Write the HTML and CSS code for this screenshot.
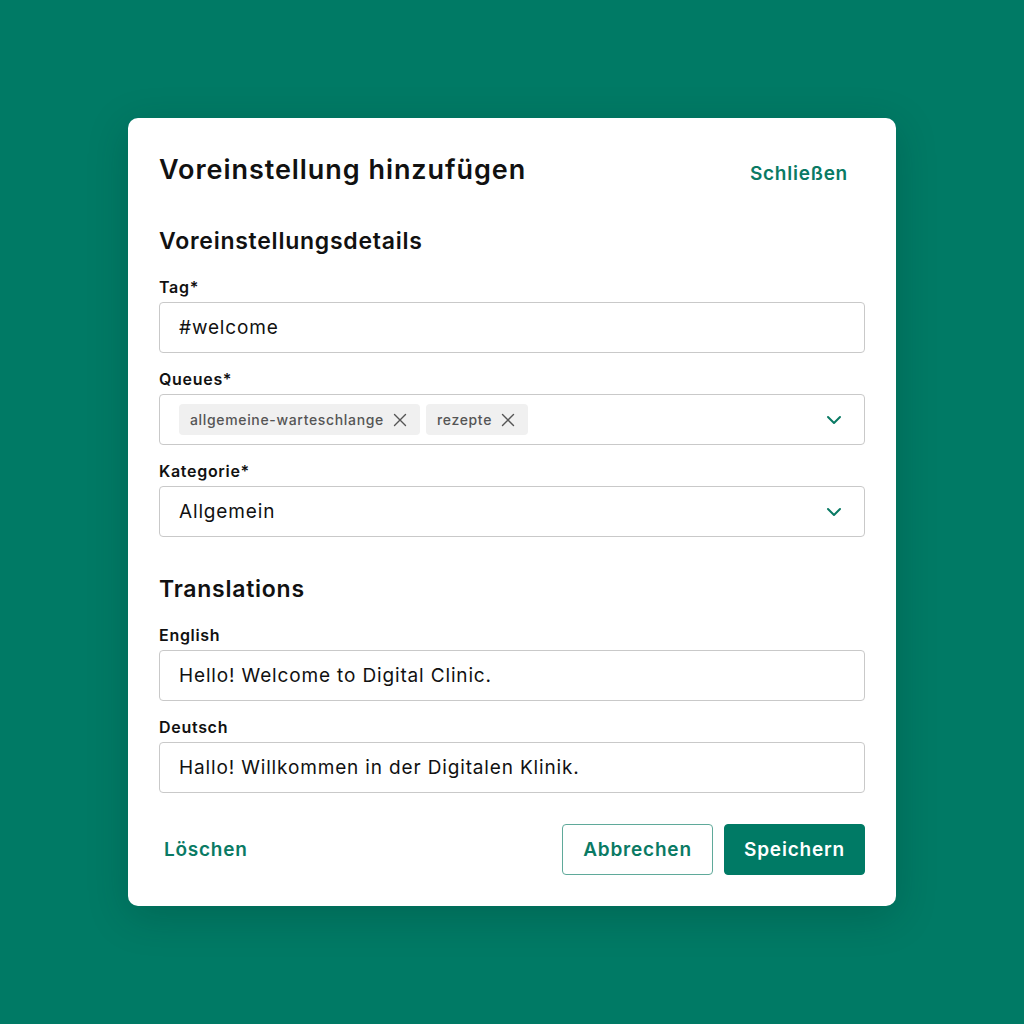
FILE: index.html
```html
<!DOCTYPE html>
<html lang="de">
<head>
<meta charset="utf-8">
<title>Voreinstellung hinzufügen</title>
<link rel="stylesheet" href="styles.css">
</head>
<body>
<div class="page">
  <div class="modal">
    <div class="header">
      <h1 class="title">Voreinstellung hinzufügen</h1>
      <button class="link close">Schließen</button>
    </div>

    <h2 class="section first">Voreinstellungsdetails</h2>
    <div class="group">
      <div class="field">
        <div class="label">Tag*</div>
        <div class="input">#welcome</div>
      </div>
      <div class="field">
        <div class="label">Queues*</div>
        <div class="input select">
          <div class="chips">
            <span class="chip">allgemeine-warteschlange<svg class="x" viewBox="0 0 14 14" width="14" height="14"><path d="M1.5 1.5 L12.5 12.5 M12.5 1.5 L1.5 12.5" stroke="#555" stroke-width="1.4" fill="none" stroke-linecap="round"/></svg></span>
            <span class="chip">rezepte<svg class="x" viewBox="0 0 14 14" width="14" height="14"><path d="M1.5 1.5 L12.5 12.5 M12.5 1.5 L1.5 12.5" stroke="#555" stroke-width="1.4" fill="none" stroke-linecap="round"/></svg></span>
          </div>
          <svg class="chev" viewBox="0 0 16 10" width="16" height="10"><path d="M2 2 L8 8 L14 2" stroke="#0a7a64" stroke-width="2" fill="none" stroke-linecap="round" stroke-linejoin="round"/></svg>
        </div>
      </div>
      <div class="field">
        <div class="label">Kategorie*</div>
        <div class="input select">
          <span>Allgemein</span>
          <svg class="chev" viewBox="0 0 16 10" width="16" height="10"><path d="M2 2 L8 8 L14 2" stroke="#0a7a64" stroke-width="2" fill="none" stroke-linecap="round" stroke-linejoin="round"/></svg>
        </div>
      </div>
    </div>

    <h2 class="section">Translations</h2>
    <div class="group">
      <div class="field">
        <div class="label">English</div>
        <div class="input">Hello! Welcome to Digital Clinic.</div>
      </div>
      <div class="field">
        <div class="label">Deutsch</div>
        <div class="input">Hallo! Willkommen in der Digitalen Klinik.</div>
      </div>
    </div>

    <div class="footer">
      <button class="link delete">Löschen</button>
      <div class="actions">
        <button class="btn outline">Abbrechen</button>
        <button class="btn primary">Speichern</button>
      </div>
    </div>
  </div>
</div>
</body>
</html>
```

FILE: styles.css
```css
* { box-sizing: border-box; }
html, body { margin: 0; padding: 0; }
body {
  background: #007a65;
  font-family: Inter, "Noto Sans", sans-serif;
  color: #111;
  width: 1024px;
  height: 1024px;
}
.page {
  padding-top: 118px;
  display: flex;
  justify-content: center;
}
.modal {
  width: 768px;
  height: 788px;
  background: #fff;
  border-radius: 10px;
  box-shadow: 0 10px 40px rgba(0, 40, 30, 0.22);
  padding: 36px 31px 31px;
  display: flex;
  flex-direction: column;
}
.header {
  display: flex;
  justify-content: space-between;
  align-items: center;
  height: 32px;
}
.title {
  margin: 0;
  font-size: 27px;
  line-height: 32px;
  font-weight: 600;
  letter-spacing: 0.95px;
}
button {
  font-family: inherit;
  cursor: pointer;
}
.link {
  background: none;
  border: none;
  color: #0a7a64;
  font-weight: 600;
  font-size: 19px;
  line-height: 24px;
  padding: 0;
  letter-spacing: 0.75px;
}
.close {
  margin-right: 17px;
  margin-top: 8px;
}
.section {
  margin: 38px 0 22px;
  font-size: 23px;
  line-height: 28px;
  font-weight: 600;
  letter-spacing: 0.75px;
}
.section.first { margin-top: 41px; }
.group {
  display: flex;
  flex-direction: column;
  gap: 16px;
}
.label {
  font-size: 16px;
  line-height: 20px;
  font-weight: 600;
  margin-bottom: 5px;
  letter-spacing: 0.7px;
}
.input {
  height: 51px;
  border: 1px solid #c9c9c9;
  border-radius: 4px;
  padding: 0 19px;
  display: flex;
  align-items: center;
  font-size: 19px;
  letter-spacing: 0.85px;
  color: #111;
}
.select { justify-content: space-between; padding-right: 22px; }
.chips { display: flex; gap: 6px; }
.chip {
  display: inline-flex;
  align-items: center;
  gap: 9px;
  height: 31px;
  padding: 0 13px 0 11px;
  background: #f0f0f0;
  border-radius: 4px;
  font-size: 14px;
  font-weight: 500;
  color: #555;
  letter-spacing: 0.66px;
}
.chev { display: block; }
.footer {
  margin-top: 31px;
  display: flex;
  justify-content: space-between;
  align-items: center;
}
.delete { margin-left: 5px; }
.actions { display: flex; gap: 11px; }
.btn {
  height: 51px;
  border-radius: 4px;
  font-size: 19px;
  font-weight: 600;
  letter-spacing: 0.8px;
}
.outline {
  width: 151px;
  background: #fff;
  color: #0a7a64;
  border: 1px solid #5fa99a;
}
.primary {
  width: 141px;
  background: #007a65;
  color: #fff;
  border: 1px solid #007a65;
}
```
